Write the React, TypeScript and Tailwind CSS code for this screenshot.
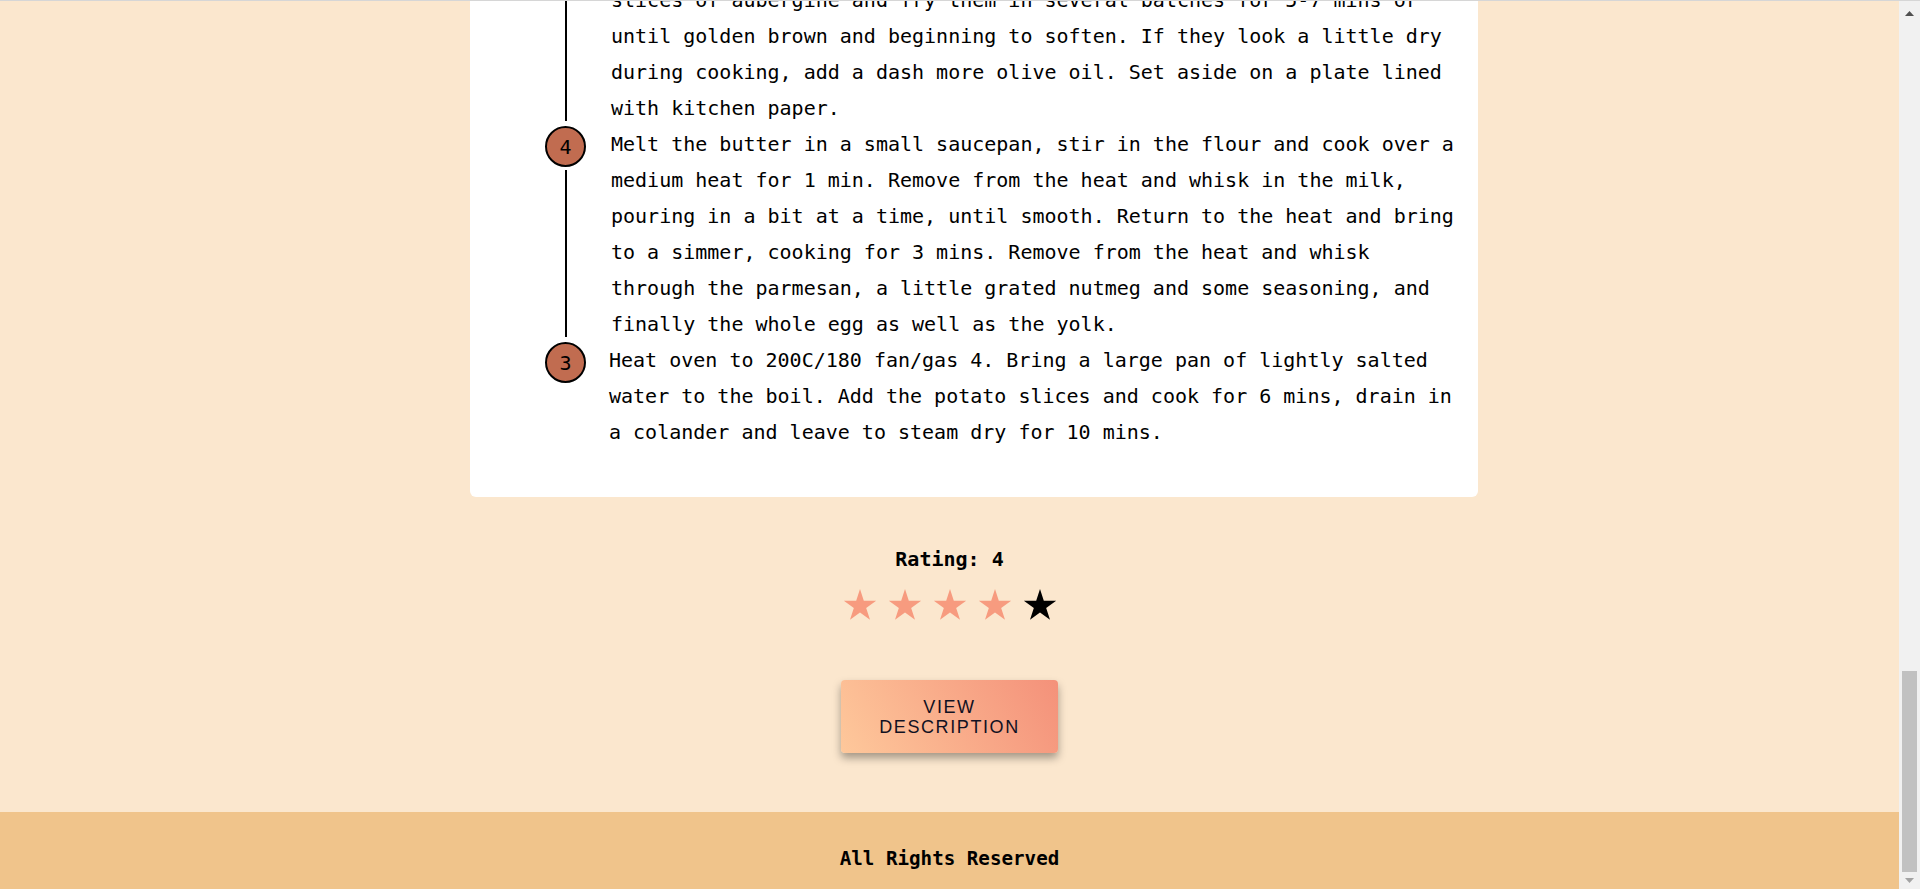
import React, { useLayoutEffect, useRef } from "react";

const mono = { fontFamily: '"DejaVu Sans Mono", "Liberation Mono", monospace' };

type Step = { n: number; text: string };

const steps: Step[] = [
  {
    n: 7,
    text: "Spoon half of the lamb sauce into a large ovenproof dish and cover with a layer of aubergine slices. Repeat with the remaining sauce and aubergine, then finish with the potato slices arranged in a single overlapping layer.",
  },
  {
    n: 6,
    text: "Heat the remaining oil in a large saucepan and fry the onion and garlic for 8-10 mins until softened. Add the lamb mince and cook until browned, then stir in the tomatoes, tomato purée, oregano and cinnamon and simmer for 20 mins until thickened. Season to taste.",
  },
  {
    n: 5,
    text: "Heat 2 tbsp of the olive oil in a large non-stick frying pan. Add the slices of aubergine and fry them in several batches for 5-7 mins or until golden brown and beginning to soften. If they look a little dry during cooking, add a dash more olive oil. Set aside on a plate lined with kitchen paper.",
  },
  {
    n: 4,
    text: "Melt the butter in a small saucepan, stir in the flour and cook over a medium heat for 1 min. Remove from the heat and whisk in the milk, pouring in a bit at a time, until smooth. Return to the heat and bring to a simmer, cooking for 3 mins. Remove from the heat and whisk through the parmesan, a little grated nutmeg and some seasoning, and finally the whole egg as well as the yolk.",
  },
  {
    n: 3,
    text: "Heat oven to 200C/180 fan/gas 4. Bring a large pan of lightly salted water to the boil. Add the potato slices and cook for 6 mins, drain in a colander and leave to steam dry for 10 mins.",
  },
];

const ingredients = [
  "3 tbsp olive oil",
  "2 large aubergines, thinly sliced",
  "500g lamb mince",
  "1 large onion, finely chopped",
  "2 garlic cloves, crushed",
  "400g can chopped tomatoes",
  "2 tbsp tomato purée",
  "1 tsp dried oregano",
  "1 tsp ground cinnamon",
  "500g potatoes, peeled and sliced",
  "50g butter",
  "50g plain flour",
  "500ml whole milk",
  "50g parmesan, finely grated",
  "1 egg, plus 1 yolk",
];

function Star({ color }: { color: string }) {
  return (
    <svg width="34" height="32" viewBox="0 0 34 32" aria-hidden="true">
      <polygon
        fill={color}
        points="17,0 20.82,11.75 33.17,11.75 23.17,19 27,30.75 17,23.5 7,30.75 10.83,19 0.83,11.75 13.18,11.75"
      />
    </svg>
  );
}

function Scrollbar() {
  return (
    <div className="flex w-[21px] shrink-0 flex-col bg-[#f1f1f1]">
      <div className="flex h-[25px] items-center justify-center">
        <svg width="9" height="5" viewBox="0 0 9 5" aria-hidden="true">
          <polygon points="4.5,0 9,5 0,5" fill="#505050" />
        </svg>
      </div>
      <div className="flex flex-1 flex-col justify-end px-[3px]">
        <div className="h-[201px] bg-[#c1c1c1]" />
      </div>
      <div className="flex h-[17px] items-center justify-center">
        <svg width="9" height="5" viewBox="0 0 9 5" aria-hidden="true">
          <polygon points="0,0 9,0 4.5,5" fill="#a3a3a3" />
        </svg>
      </div>
    </div>
  );
}

export default function App() {
  const ref = useRef<HTMLDivElement>(null);
  useLayoutEffect(() => {
    const el = ref.current;
    if (el) el.scrollTop = el.scrollHeight;
  }, []);

  return (
    <div className="flex h-screen border-t border-[#d6d6d6] bg-[#fbe7ce] text-black" style={mono}>
      <div ref={ref} className="flex-1 overflow-hidden">
        <div className="flex min-h-full flex-col">
          <header className="flex h-[70px] items-center justify-center bg-[#f0c48b]">
            <span className="text-[24px] font-bold">Recipe Book</span>
          </header>

          <main className="flex flex-1 flex-col items-center">
            <div className="mt-[40px] flex w-[1057px] flex-col pl-[49px]">
              <div className="flex h-[420px] flex-col items-center justify-center rounded-md bg-[#f6d3b0]">
                <h1 className="text-[36px] font-bold">Moussaka</h1>
                <p className="mt-4 text-[20px]">Serves 6 · Prep 45 mins · Cook 1 hr 15 mins</p>
              </div>

              <div className="mt-[40px] rounded-md bg-white pb-[47px] pl-[75px] pr-[21px] pt-[30px]">
                <h2 className="text-[28px] font-bold leading-[48px]">Ingredients</h2>
                <ul className="mb-8 mt-2 list-disc pl-8 text-[20px] leading-[36px]">
                  {ingredients.map((i) => (
                    <li key={i}>{i}</li>
                  ))}
                </ul>
                <h2 className="mb-4 text-[28px] font-bold leading-[48px]">Method</h2>
                <div className="flex flex-col">
                  {steps.map((s, idx) => (
                    <div key={s.n} className="flex">
                      <div className="flex w-[41px] shrink-0 flex-col items-center">
                        <div className="flex h-[41px] w-[41px] items-center justify-center rounded-full border-2 border-black bg-[#c16c50] text-[20px] leading-none">
                          {s.n}
                        </div>
                        {idx < steps.length - 1 && <div className="mb-[5px] mt-[3px] w-[2px] flex-1 bg-black" />}
                      </div>
                      <p
                        className={
                          s.n === 3
                            ? "ml-[23px] w-[846px] text-[20px] leading-[36px]"
                            : "ml-[25px] w-[846px] text-[20px] leading-[36px]"
                        }
                      >
                        {s.text}
                      </p>
                    </div>
                  ))}
                </div>
              </div>
            </div>

            <div className="mt-[50px] flex flex-col items-center">
              <div className="h-[24px] text-[20px] font-bold leading-[24px]">Rating: 4</div>
              <div className="mt-[18px] flex h-[32px] items-center gap-[11px]">
                <Star color="#f79b7f" />
                <Star color="#f79b7f" />
                <Star color="#f79b7f" />
                <Star color="#f79b7f" />
                <Star color="#000000" />
              </div>
            </div>

            <button
              type="button"
              className="mb-[59px] mt-[59px] flex h-[73px] w-[217px] items-center justify-center rounded-[4px] bg-[linear-gradient(60deg,#fec89b_0%,#f4917a_100%)] px-[28px] text-center text-[18px] uppercase leading-[20px] tracking-[1.6px] text-[#111122] shadow-[0_5px_9px_rgba(0,0,0,0.35)]"
              style={{ fontFamily: '"Liberation Sans", Arial, sans-serif' }}
            >
              View Description
            </button>
          </main>

          <footer className="flex flex-col items-center bg-[#f0c48b] pb-[19px] pt-[36px]">
            <p className="text-[19.2px] font-bold leading-[22px]">All Rights Reserved</p>
          </footer>
        </div>
      </div>
      <Scrollbar />
    </div>
  );
}
